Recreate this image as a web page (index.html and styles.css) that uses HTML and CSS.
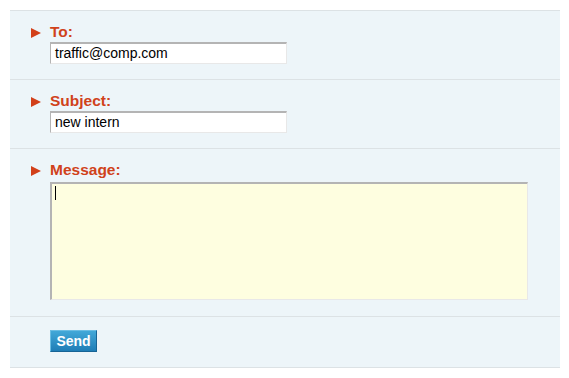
FILE: index.html
```html
<!DOCTYPE html>
<html>
<head>
<meta charset="utf-8">
<link rel="stylesheet" href="styles.css">
</head>
<body>
<form class="panel">
  <div class="row">
    <span class="arrow"></span>
    <div class="field">
      <div class="label">To:</div>
      <div class="input">traffic@comp.com</div>
    </div>
  </div>
  <div class="row">
    <span class="arrow"></span>
    <div class="field">
      <div class="label">Subject:</div>
      <div class="input">new intern</div>
    </div>
  </div>
  <div class="row">
    <span class="arrow"></span>
    <div class="field">
      <div class="label">Message:</div>
      <div class="textarea"><span class="caret"></span></div>
    </div>
  </div>
  <div class="row row-actions">
    <span></span>
    <div class="field">
      <button type="button" class="send">Send</button>
    </div>
  </div>
</form>
</body>
</html>
```
FILE: styles.css
```css
html, body {
  margin: 0;
  padding: 0;
  background: #ffffff;
}
body {
  font-family: "Liberation Sans", Arial, sans-serif;
}
.panel {
  margin: 10px 9px 0 10px;
  width: 550px;
  background: #edf5f9;
  border-top: 1px solid #dce2e5;
}
.row {
  display: grid;
  grid-template-columns: 19px 1fr;
  padding: 12px 0 15px 21px;
  border-bottom: 1px solid #dce2e5;
}
.arrow {
  width: 0;
  height: 0;
  margin-top: 5px;
  border-top: 5px solid transparent;
  border-bottom: 5px solid transparent;
  border-left: 10px solid #d2401a;
}
.label {
  font-size: 15.5px;
  font-weight: bold;
  line-height: 18px;
  color: #d0421b;
}
.input {
  margin-top: 1px;
  width: 227px;
  height: 19px;
  padding: 0 4px;
  background: #ffffff;
  border-top: 2px solid #b4b4b4;
  border-left: 1px solid #b4b4b4;
  border-right: 1px solid #e8e8e8;
  border-bottom: 1px solid #e8e8e8;
  font-size: 14px;
  line-height: 19px;
  color: #000;
}
.textarea {
  margin: 3px 0 1px;
  width: 472px;
  height: 115px;
  padding: 0 0 0 3px;
  background: #fefee0;
  border-top: 2px solid #b4b4b4;
  border-left: 2px solid #b4b4b4;
  border-right: 1px solid #e8e8e8;
  border-bottom: 1px solid #e8e8e8;
}
.caret {
  display: inline-block;
  width: 1px;
  height: 14px;
  margin-top: 2px;
  background: #000;
}
.row-actions {
  padding: 13px 0 15px 21px;
}
.send {
  display: block;
  width: 47px;
  height: 22px;
  margin: 0;
  padding: 0;
  background: linear-gradient(#42a8d8, #1f7db6);
  border-top: 1px solid #6bbde3;
  border-left: 1px solid #6bbde3;
  border-right: 1px solid #176496;
  border-bottom: 1px solid #176496;
  color: #ffffff;
  font-family: "Liberation Sans", Arial, sans-serif;
  font-size: 14px;
  font-weight: bold;
  line-height: 20px;
  text-align: center;
}
```
